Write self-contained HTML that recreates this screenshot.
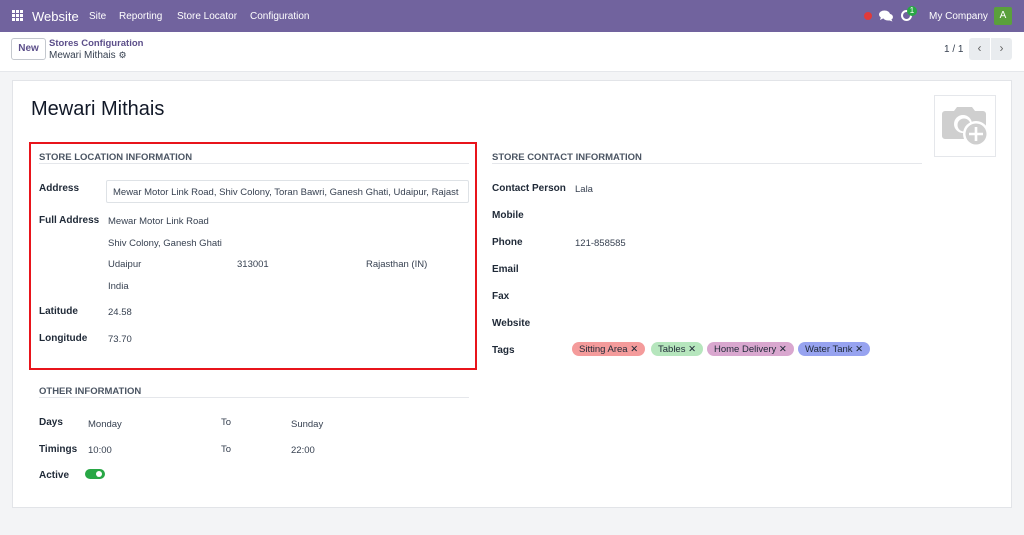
<!DOCTYPE html>
<html><head><style>
*{margin:0;padding:0;box-sizing:border-box}
body{width:1024px;height:535px;background:#f3f4f6;font-family:"Liberation Sans",sans-serif;color:#374151;position:relative;overflow:hidden;font-size:10px}
.a{position:absolute;white-space:nowrap}
.nav{left:0;top:0;width:1024px;height:32px;background:#71639e;color:#fff}
.cp{left:0;top:32px;width:1024px;height:40px;background:#fff;border-bottom:1px solid #e5e7eb}
.sheet{left:12px;top:80px;width:1000px;height:428px;background:#fff;border:1px solid #e2e4e8}
.h{font-weight:bold;font-size:9.5px;color:#4b5563;margin-top:1px}
.ln{height:1px;background:#e5e7eb}
.l{font-weight:bold;color:#1f2937;font-size:10px;margin-top:2px}
.v{font-size:9.5px;color:#374151;margin-top:2px}
.tag{position:absolute;top:342px;height:14px;border-radius:7px;font-size:9.5px;line-height:15px;padding:0 7px;color:#1f2937;white-space:nowrap}
</style></head><body>
<div class="a nav">
 <svg class="a" style="left:12px;top:10px" width="11" height="11" viewBox="0 0 11 11" fill="#fff"><rect x="0" y="0" width="3" height="3"/><rect x="4" y="0" width="3" height="3"/><rect x="8" y="0" width="3" height="3"/><rect x="0" y="4" width="3" height="3"/><rect x="4" y="4" width="3" height="3"/><rect x="8" y="4" width="3" height="3"/><rect x="0" y="8" width="3" height="3"/><rect x="4" y="8" width="3" height="3"/><rect x="8" y="8" width="3" height="3"/></svg>
 <div class="a" style="left:32px;top:9px;font-size:13px">Website</div>
 <div class="a" style="left:89px;top:11px;font-size:10px">Site</div>
 <div class="a" style="left:119px;top:11px;font-size:10px">Reporting</div>
 <div class="a" style="left:177px;top:11px;font-size:10px">Store Locator</div>
 <div class="a" style="left:250px;top:11px;font-size:10px">Configuration</div>
 <div class="a" style="left:864px;top:12px;width:8px;height:8px;border-radius:50%;background:#e03a3a"></div>
 <svg class="a" style="left:879px;top:10px" width="14" height="12" viewBox="0 0 14 12" fill="#fff"><ellipse cx="5.5" cy="4.5" rx="5.5" ry="4"/><path d="M2 7l-1 3 4-2z"/><ellipse cx="9" cy="7" rx="5" ry="3.5"/><path d="M12 9l1.5 2.5-4-1.5z"/></svg>
 <div class="a" style="left:901px;top:10px;width:11px;height:11px;border:2px solid #fff;border-radius:50%"></div>
 <div class="a" style="left:907px;top:6px;width:10px;height:10px;border-radius:5px;background:#28a745;font-size:8px;text-align:center;line-height:10px">1</div>
 <div class="a" style="left:929px;top:11px;font-size:10px">My Company</div>
 <div class="a" style="left:994px;top:7px;width:18px;height:18px;background:#5aa03c;border-radius:2px;text-align:center;line-height:18px;font-size:10px">A</div>
</div>
<div class="a cp">
 <div class="a" style="left:11px;top:6px;width:35px;height:22px;border:1px solid #c4c8ce;border-radius:3px;text-align:center;line-height:20px;font-weight:bold;color:#5c4f8a">New</div>
 <div class="a" style="left:49px;top:6px;font-weight:bold;color:#5c4f8a;font-size:9.5px">Stores Configuration</div>
 <div class="a" style="left:49px;top:18px;color:#374151;font-size:10px">Mewari Mithais <span style="font-size:9px">⚙</span></div>
 <div class="a" style="left:944px;top:12px;font-size:10px">1 / 1</div>
 <div class="a" style="left:969px;top:6px;width:21px;height:22px;background:#e9ecef;border-radius:3px 0 0 3px;text-align:center;line-height:21px;color:#666;font-size:12px">‹</div>
 <div class="a" style="left:991px;top:6px;width:21px;height:22px;background:#e9ecef;border-radius:0 3px 3px 0;text-align:center;line-height:21px;color:#666;font-size:12px">›</div>
</div>
<div class="a sheet"></div>
<div class="a" style="left:31px;top:98px;font-size:20px;color:#111827">Mewari Mithais</div>
<div class="a" style="left:934px;top:95px;width:62px;height:62px;border:1px solid #e5e7eb">
 <svg width="60" height="60" viewBox="0 0 60 60"><path d="M10 15h9l3-4h15l3 4h8a3 3 0 0 1 3 3v22a3 3 0 0 1-3 3H10a3 3 0 0 1-3-3V18a3 3 0 0 1 3-3z" fill="#cfcfcf"/><circle cx="28" cy="28" r="9" fill="#fff"/><circle cx="29" cy="29" r="6.5" fill="#cfcfcf"/><circle cx="41" cy="38" r="13" fill="#fff"/><circle cx="41" cy="38" r="10.5" fill="#cfcfcf"/><path d="M41 31v14M34 38h14" stroke="#fff" stroke-width="2.6"/></svg>
</div>
<div class="a" style="left:29px;top:142px;width:448px;height:228px;border:2px solid #e8141b"></div>
<div class="a h" style="left:39px;top:151px">STORE LOCATION INFORMATION</div>
<div class="a ln" style="left:39px;top:163px;width:430px"></div>
<div class="a l" style="left:39px;top:181px">Address</div>
<div class="a" style="left:106px;top:180px;width:363px;height:23px;border:1px solid #dee2e6;border-radius:2px;overflow:hidden;padding:6px 6px;font-size:9.5px;white-space:nowrap">Mewar Motor Link Road, Shiv Colony, Toran Bawri, Ganesh Ghati, Udaipur, Rajast</div>
<div class="a l" style="left:39px;top:213px">Full Address</div>
<div class="a v" style="left:108px;top:214px">Mewar Motor Link Road</div>
<div class="a v" style="left:108px;top:236px">Shiv Colony, Ganesh Ghati</div>
<div class="a v" style="left:108px;top:257px">Udaipur</div>
<div class="a v" style="left:237px;top:257px">313001</div>
<div class="a v" style="left:366px;top:257px">Rajasthan (IN)</div>
<div class="a v" style="left:108px;top:279px">India</div>
<div class="a l" style="left:39px;top:304px">Latitude</div>
<div class="a v" style="left:108px;top:305px">24.58</div>
<div class="a l" style="left:39px;top:331px">Longitude</div>
<div class="a v" style="left:108px;top:332px">73.70</div>
<div class="a h" style="left:39px;top:385px">OTHER INFORMATION</div>
<div class="a ln" style="left:39px;top:397px;width:430px"></div>
<div class="a l" style="left:39px;top:415px">Days</div>
<div class="a v" style="left:88px;top:417px">Monday</div>
<div class="a v" style="left:221px;top:415px">To</div>
<div class="a v" style="left:291px;top:417px">Sunday</div>
<div class="a l" style="left:39px;top:442px">Timings</div>
<div class="a v" style="left:88px;top:443px">10:00</div>
<div class="a v" style="left:221px;top:442px">To</div>
<div class="a v" style="left:291px;top:443px">22:00</div>
<div class="a l" style="left:39px;top:468px">Active</div>
<div class="a" style="left:85px;top:469px;width:20px;height:10px;border-radius:5px;background:#28a745"><div class="a" style="left:11px;top:2px;width:6px;height:6px;border-radius:50%;background:#fff"></div></div>
<div class="a h" style="left:492px;top:151px">STORE CONTACT INFORMATION</div>
<div class="a ln" style="left:492px;top:163px;width:430px"></div>
<div class="a l" style="left:492px;top:181px">Contact Person</div>
<div class="a v" style="left:575px;top:182px">Lala</div>
<div class="a l" style="left:492px;top:208px">Mobile</div>
<div class="a l" style="left:492px;top:235px">Phone</div>
<div class="a v" style="left:575px;top:236px">121-858585</div>
<div class="a l" style="left:492px;top:262px">Email</div>
<div class="a l" style="left:492px;top:289px">Fax</div>
<div class="a l" style="left:492px;top:316px">Website</div>
<div class="a l" style="left:492px;top:343px">Tags</div>
<div class="tag" style="left:572px;background:#f49b9b">Sitting Area ✕</div>
<div class="tag" style="left:651px;background:#b6e6bd">Tables ✕</div>
<div class="tag" style="left:707px;background:#d9a7cf">Home Delivery ✕</div>
<div class="tag" style="left:798px;background:#97a3f0">Water Tank ✕</div>
</body></html>
